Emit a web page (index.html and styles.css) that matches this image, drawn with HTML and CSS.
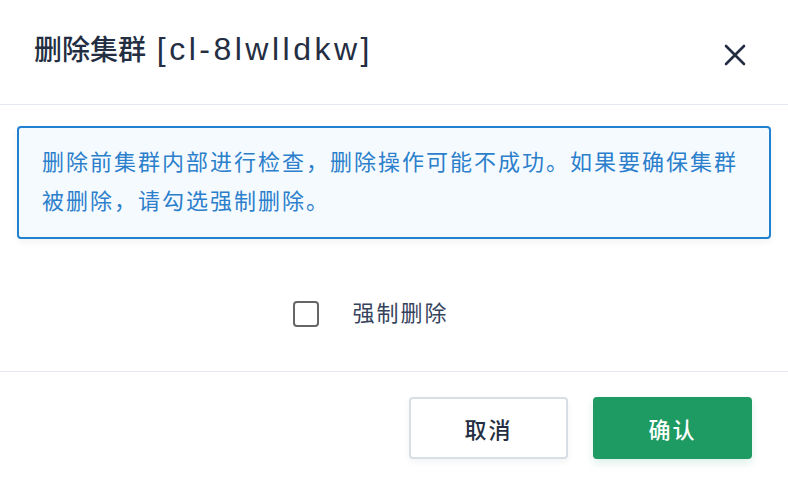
FILE: index.html
```html
<!DOCTYPE html>
<html lang="zh-CN">
<head>
<meta charset="utf-8">
<link rel="stylesheet" href="styles.css">
</head>
<body>
<div class="dialog">
  <div class="header">
    <h1 class="title">删除集群 <span class="id">[cl-8lwlldkw]</span></h1>
    <button class="close" aria-label="关闭">
      <svg width="22" height="22" viewBox="0 0 22 22"><path d="M2 2 L20 20 M20 2 L2 20" stroke="#242e42" stroke-width="2.6" stroke-linecap="round" fill="none"/></svg>
    </button>
  </div>
  <div class="body">
    <div class="alert">删除前集群内部进行检查，删除操作可能不成功。如果要确保集群被删除，请勾选强制删除。</div>
    <label class="check">
      <span class="box"></span>
      <span class="label">强制删除</span>
    </label>
  </div>
  <div class="footer">
    <button class="btn btn-default">取消</button>
    <button class="btn btn-primary">确认</button>
  </div>
</div>
</body>
</html>
```
FILE: styles.css
```css
* { box-sizing: border-box; }
html, body { margin: 0; padding: 0; background: #fff; }
body {
  font-family: "Liberation Sans", "Noto Sans CJK SC", sans-serif;
  color: #242e42;
}
.dialog {
  width: 788px;
  height: 480px;
  display: flex;
  flex-direction: column;
}
.header {
  height: 105px;
  border-bottom: 1px solid #e3e9ef;
  display: flex;
  align-items: center;
  justify-content: space-between;
  padding: 0 42px 0 34px;
}
.title {
  margin: 0;
  font-size: 28px;
  font-weight: 500;
  line-height: 36px;
  color: #242e42;
  position: relative;
  top: -2px;
}
.id {
  font-size: 32px;
  font-weight: 400;
  letter-spacing: 3.5px;
  margin-left: 3px;
}
.close {
  border: 0;
  background: none;
  padding: 0;
  width: 22px;
  height: 22px;
  display: flex;
  margin-top: 6px;
}
.body {
  padding: 21px 17px 0;
  height: 266px;
  display: flex;
  flex-direction: column;
}
.alert {
  border: 2px solid #2180d0;
  background: #f5faff;
  border-radius: 4px;
  padding: 15px 22px 16px 23px;
  font-size: 22px;
  letter-spacing: 2px;
  line-height: 39px;
  color: #2b7fcb;
  box-shadow: 0 3px 6px rgba(36, 46, 66, 0.06);
}
.check {
  margin-top: 62px;
  margin-right: 46px;
  align-self: center;
  display: flex;
  align-items: center;
  gap: 33px;
}
.box {
  width: 26px;
  height: 26px;
  border: 2px solid #666;
  border-radius: 4px;
  background: #fff;
}
.label {
  font-size: 22px;
  letter-spacing: 2px;
  color: #36435c;
  line-height: 26px;
}
.footer {
  border-top: 1px solid #e3e9ef;
  padding: 25px 36px 0 0;
  display: flex;
  justify-content: flex-end;
  gap: 25px;
}
.btn {
  width: 159px;
  height: 62px;
  border-radius: 4px;
  font-family: inherit;
  font-size: 22px;
  letter-spacing: 2px;
  font-weight: 500;
  cursor: pointer;
}
.btn-default {
  background: #fff;
  border: 2px solid #d8dee5;
  color: #242e42;
  box-shadow: 0 3px 6px rgba(36, 46, 66, 0.06);
}
.btn-primary {
  background: #1e9a63;
  border: 0;
  color: #fff;
  box-shadow: 0 4px 8px rgba(30, 154, 99, 0.15);
}
```
